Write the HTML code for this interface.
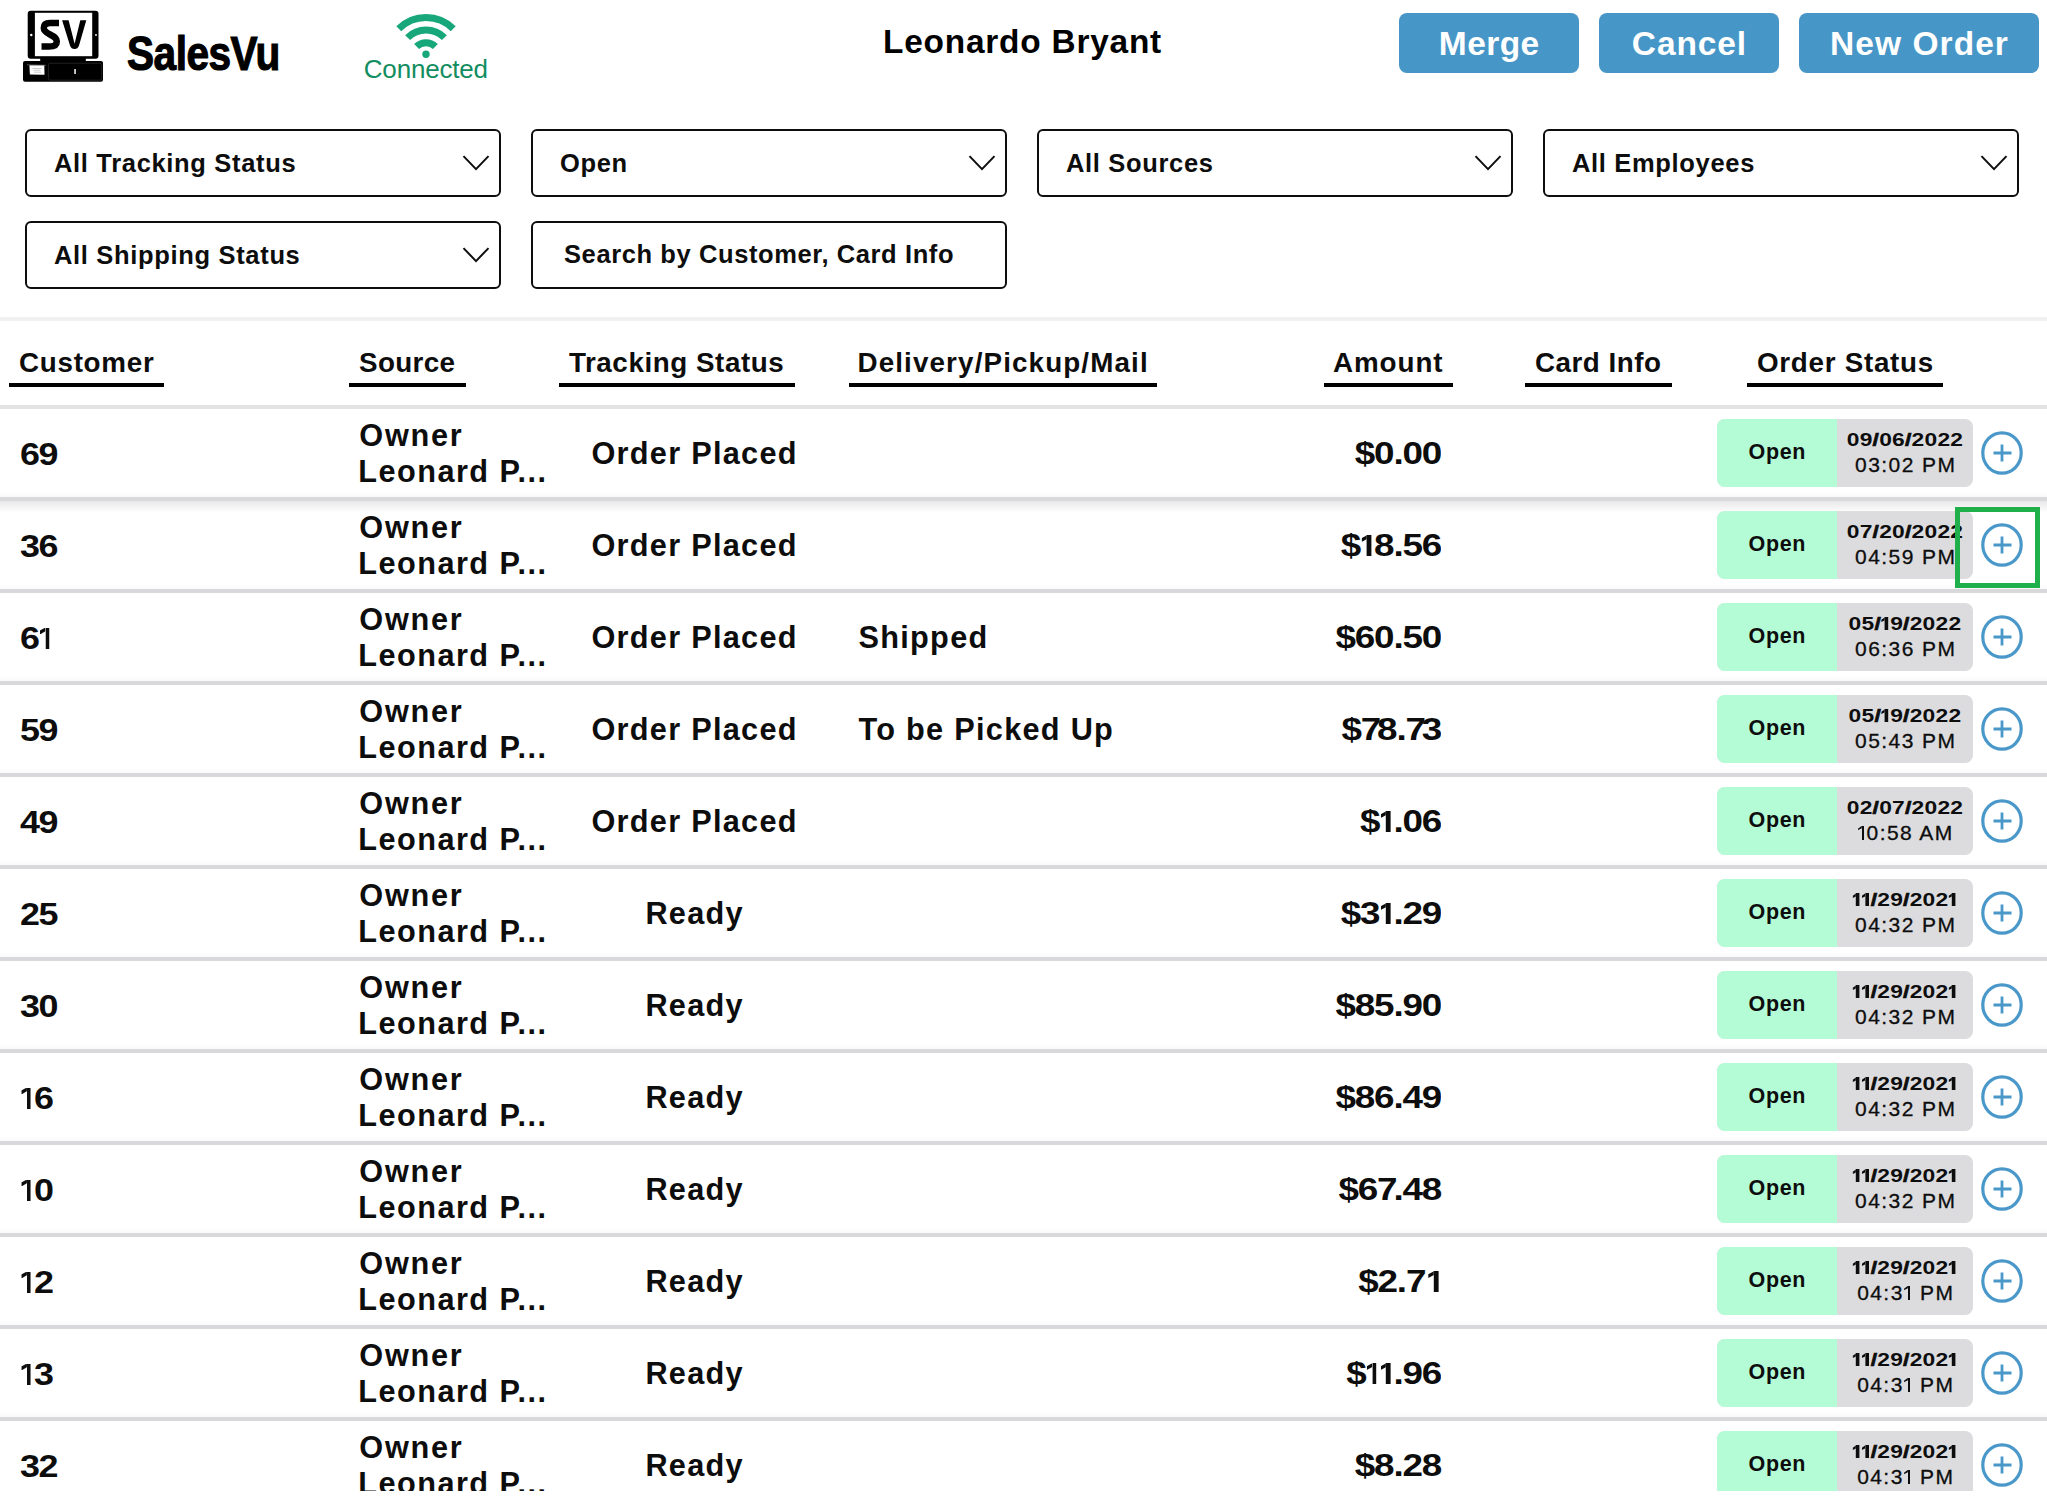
<!DOCTYPE html>
<html><head><meta charset="utf-8"><style>
html,body{margin:0;padding:0;background:#fff;}
body{width:2047px;height:1499px;overflow:hidden;position:relative;font-family:"Liberation Sans",sans-serif;}
.t{position:absolute;white-space:nowrap;line-height:1;font-weight:700;color:#0d0d0d;}
.box{position:absolute;box-sizing:border-box;border:2px solid #0d0d0d;border-radius:6px;background:#fff;}
.btn{position:absolute;background:#4796c8;border-radius:8px;top:13px;height:60px;}
.hl{position:absolute;left:0;width:2047px;}
.ul{position:absolute;height:4px;background:#000;top:383px;}
.o1{display:inline-block;position:relative;width:11.97px;height:21.0px;}.o1::before{content:'';position:absolute;bottom:0;left:5.64px;width:3.85px;height:21.0px;background:currentColor;}.o1::after{content:'';position:absolute;top:0;left:1.11px;width:4.79px;height:6.9px;background:currentColor;clip-path:polygon(0 3.0px,100% 0,100% 3.8px,0 6.9px);}
.o2{display:inline-block;position:relative;width:11.67px;height:21.0px;}.o2::before{content:'';position:absolute;bottom:0;left:5.50px;width:3.75px;height:21.0px;background:currentColor;}.o2::after{content:'';position:absolute;top:0;left:1.08px;width:4.67px;height:6.9px;background:currentColor;clip-path:polygon(0 3.0px,100% 0,100% 3.8px,0 6.9px);}
.o3{display:inline-block;position:relative;width:7.58px;height:12.9px;}.o3::before{content:'';position:absolute;bottom:0;left:3.00px;width:3.00px;height:12.9px;background:currentColor;}.o3::after{content:'';position:absolute;top:0;left:0.25px;width:3.00px;height:4.8px;background:currentColor;clip-path:polygon(0 2.5px,100% 0,100% 3.0px,0 4.8px);}
.o4{display:inline-block;position:relative;width:8.90px;height:14.6px;}.o4::before{content:'';position:absolute;bottom:0;left:3.80px;width:2.80px;height:14.6px;background:currentColor;}.o4::after{content:'';position:absolute;top:0;left:0.00px;width:4.10px;height:4.6px;background:currentColor;clip-path:polygon(0 3.3px,100% 0,100% 2.5px,0 4.6px);}
</style></head><body>
<svg style="position:absolute;left:0;top:0" width="120" height="90" viewBox="0 0 120 90">
<rect x="27.7" y="10.8" width="70.8" height="48" rx="3" fill="#000"/>
<rect x="34.9" y="12.8" width="57.3" height="43.4" fill="#fff"/>
<circle cx="31.3" cy="35" r="1.2" fill="#fff"/><circle cx="96" cy="35" r="0.9" fill="#fff"/>
<rect x="40.2" y="58" width="45.6" height="4" fill="#000"/>
<rect x="23" y="61" width="80" height="20.7" rx="2" fill="#000"/>
<rect x="48.4" y="63.2" width="53.3" height="17" rx="2" fill="none" stroke="#444" stroke-width="0.5"/>
<path d="M29.4 65.3 L44.3 65.3 L44.5 74.7 L29.9 74.5 Z" fill="#fff"/>
<path d="M27 64.8 L46 65.3" stroke="#888" stroke-width="0.6"/>
<path d="M32.5 68.5 H41.5 M33.5 70.3 H40.5 M34 72.2 H41" stroke="#999" stroke-width="0.5"/>
<rect x="74.3" y="69" width="1.5" height="5" fill="#fff"/>
<path d="M59 23.1 L50 23.1 C45.5 23.1 43.8 25 43.8 28 C43.8 31 46 32.5 50 34.5 C55 37 56.8 38.5 56.8 41.5 C56.8 45 54 46.6 49 46.6 L41.5 46.6" fill="none" stroke="#000" stroke-width="6.5"/>
<path d="M62.1 20.2 L68.6 20.2 L74.6 43.8 L80.3 20.2 L86.3 20.2 L79 45.5 Q77.8 49 74.5 49 Q71.2 49 70 45.5 Z" fill="#000"/>
</svg>
<div class="t" style="left:126.5px;top:28.81px;font-size:48.9px;letter-spacing:-0.6px;color:#000;transform:scaleX(0.83);transform-origin:0 0;-webkit-text-stroke:1.2px #000;">SalesVu</div>
<svg style="position:absolute;left:380px;top:0" width="92" height="62" viewBox="380 0 92 62">
<g fill="none" stroke="#18a77a" stroke-width="7">
<path d="M398.78 28.78 A38.5 38.5 0 0 1 453.22 28.78"/>
<path d="M407.62 37.62 A26 26 0 0 1 444.38 37.62"/>
<path d="M416.6 46.6 A13.3 13.3 0 0 1 435.4 46.6"/>
</g><circle cx="426" cy="54.2" r="3.7" fill="#18a77a"/></svg>
<div class="t" style="left:363.8px;top:55.89px;font-size:26px;letter-spacing:-0.2px;font-weight:400;color:#128d60;">Connected</div>
<div class="t" style="left:883px;top:24.93px;font-size:33.4px;letter-spacing:0.79px;color:#000;">Leonardo Bryant</div>
<div class="btn" style="left:1399px;width:180px"></div>
<div class="t" style="left:1399px;top:26.94px;font-size:33.5px;letter-spacing:0.4px;color:#fff;width:180px;text-align:center;text-indent:0.4px;">Merge</div>
<div class="btn" style="left:1599px;width:180px"></div>
<div class="t" style="left:1599px;top:26.94px;font-size:33.5px;letter-spacing:0.88px;color:#fff;width:180px;text-align:center;text-indent:0.88px;">Cancel</div>
<div class="btn" style="left:1799px;width:240px"></div>
<div class="t" style="left:1799px;top:26.94px;font-size:33.5px;letter-spacing:1.05px;color:#fff;width:240px;text-align:center;text-indent:1.05px;">New Order</div>
<div class="box" style="left:25px;top:129px;width:476px;height:68px"></div>
<svg style="position:absolute;left:462px;top:152px" width="30" height="22" viewBox="0 0 30 22"><path d="M1.5 4.1 L14 17.1 L26.5 4.1" fill="none" stroke="#0d0d0d" stroke-width="2"/></svg>
<div class="t" style="left:54px;top:151.41px;font-size:25.5px;letter-spacing:0.67px;">All Tracking Status</div>
<div class="box" style="left:531px;top:129px;width:476px;height:68px"></div>
<svg style="position:absolute;left:968px;top:152px" width="30" height="22" viewBox="0 0 30 22"><path d="M1.5 4.1 L14 17.1 L26.5 4.1" fill="none" stroke="#0d0d0d" stroke-width="2"/></svg>
<div class="t" style="left:560px;top:151.41px;font-size:25.5px;letter-spacing:0.67px;">Open</div>
<div class="box" style="left:1037px;top:129px;width:476px;height:68px"></div>
<svg style="position:absolute;left:1474px;top:152px" width="30" height="22" viewBox="0 0 30 22"><path d="M1.5 4.1 L14 17.1 L26.5 4.1" fill="none" stroke="#0d0d0d" stroke-width="2"/></svg>
<div class="t" style="left:1066px;top:151.41px;font-size:25.5px;letter-spacing:0.67px;">All Sources</div>
<div class="box" style="left:1543px;top:129px;width:476px;height:68px"></div>
<svg style="position:absolute;left:1980px;top:152px" width="30" height="22" viewBox="0 0 30 22"><path d="M1.5 4.1 L14 17.1 L26.5 4.1" fill="none" stroke="#0d0d0d" stroke-width="2"/></svg>
<div class="t" style="left:1572px;top:151.41px;font-size:25.5px;letter-spacing:0.67px;">All Employees</div>
<div class="box" style="left:25px;top:221px;width:476px;height:68px"></div>
<svg style="position:absolute;left:462px;top:244px" width="30" height="22" viewBox="0 0 30 22"><path d="M1.5 4.1 L14 17.1 L26.5 4.1" fill="none" stroke="#0d0d0d" stroke-width="2"/></svg>
<div class="t" style="left:54px;top:242.61px;font-size:25.5px;letter-spacing:0.67px;">All Shipping Status</div>
<div class="box" style="left:531px;top:221px;width:476px;height:68px"></div>
<div class="t" style="left:564px;top:241.61px;font-size:25.5px;letter-spacing:0.6px;">Search by Customer, Card Info</div>
<div class="hl" style="top:317px;height:4px;background:#f1f1f1"></div>
<div class="hl" style="top:405px;height:4px;background:#e3e3e3"></div>
<div class="t" style="left:19px;top:349.47px;font-size:27.8px;letter-spacing:0.71px;">Customer</div>
<div class="ul" style="left:9px;width:155px"></div>
<div class="t" style="left:359px;top:349.47px;font-size:27.8px;letter-spacing:0.35px;">Source</div>
<div class="ul" style="left:349px;width:117px"></div>
<div class="t" style="left:569px;top:349.47px;font-size:27.8px;letter-spacing:0.55px;">Tracking Status</div>
<div class="ul" style="left:559px;width:236px"></div>
<div class="t" style="left:857.5px;top:349.47px;font-size:27.8px;letter-spacing:1.12px;">Delivery/Pickup/Mail</div>
<div class="ul" style="left:849px;width:308px"></div>
<div class="t" style="left:1333px;top:349.47px;font-size:27.8px;letter-spacing:0.91px;">Amount</div>
<div class="ul" style="left:1324px;width:129px"></div>
<div class="t" style="left:1535px;top:349.47px;font-size:27.8px;letter-spacing:0.5px;">Card Info</div>
<div class="ul" style="left:1525px;width:147px"></div>
<div class="t" style="left:1757px;top:349.47px;font-size:27.8px;letter-spacing:0.71px;">Order Status</div>
<div class="ul" style="left:1747px;width:196px"></div>
<div style="position:absolute;left:0;top:0;width:2047px;height:1491px;overflow:hidden">
<div class="hl" style="top:492px;height:5px;background:linear-gradient(rgba(0,0,0,0),rgba(0,0,0,0.025))"></div><div class="hl" style="top:497px;height:4px;background:#d9d9dc"></div>
<div class="t" style="left:19.8px;top:439.51px;font-size:30.7px;letter-spacing:-1.2px;transform:scaleX(1.17);transform-origin:0 0;">69</div>
<div class="t" style="left:359.3px;top:420.51px;font-size:30.7px;letter-spacing:1.75px;">Owner</div>
<div class="t" style="left:358.3px;top:457.41px;font-size:30.7px;letter-spacing:1.45px;">Leonard P...</div>
<div class="t" style="left:494px;top:439.21px;font-size:30.7px;letter-spacing:1.28px;width:400px;text-align:center;text-indent:1.28px;">Order Placed</div>
<div class="t" style="left:1041.0px;top:439.21px;font-size:30.7px;letter-spacing:-1.0px;width:400px;text-align:right;transform:scaleX(1.2);transform-origin:100% 0;">$0.00</div>
<div style="position:absolute;left:1717px;top:419px;width:256px;height:68px;border-radius:8px;background:#dcdcde;overflow:hidden"><div style="width:120px;height:68px;background:#b4fcd6"></div></div>
<div class="t" style="left:1717px;top:441.90px;font-size:21.5px;letter-spacing:0.6px;width:120px;text-align:center;text-indent:0.6px;">Open</div>
<div class="t" style="left:1837px;top:430.12px;font-size:19px;letter-spacing:0.2px;width:136px;text-align:center;transform:scaleX(1.2);transform-origin:50% 0;">09<span style="-webkit-text-stroke:0.7px">/</span>06<span style="-webkit-text-stroke:0.7px">/</span>2022</div>
<div class="t" style="left:1837px;top:454.22px;font-size:21px;letter-spacing:1.44px;font-weight:400;width:136px;text-align:center;text-indent:1.44px;-webkit-text-stroke:0.3px #0d0d0d;">03:02 PM</div>
<svg style="position:absolute;left:1978px;top:429px" width="48" height="48" viewBox="0 0 48 48"><ellipse cx="24" cy="24" rx="19.2" ry="20.2" fill="none" stroke="#4a98c9" stroke-width="3.2"/><path d="M15.5 24 H33.5 M24 15.5 V32.5" stroke="#4a98c9" stroke-width="2.8"/></svg>
<div class="hl" style="top:584px;height:5px;background:linear-gradient(rgba(0,0,0,0),rgba(0,0,0,0.025))"></div><div class="hl" style="top:589px;height:4px;background:#d9d9dc"></div>
<div class="t" style="left:19.8px;top:531.51px;font-size:30.7px;letter-spacing:-1.2px;transform:scaleX(1.17);transform-origin:0 0;">36</div>
<div class="t" style="left:359.3px;top:512.51px;font-size:30.7px;letter-spacing:1.75px;">Owner</div>
<div class="t" style="left:358.3px;top:549.41px;font-size:30.7px;letter-spacing:1.45px;">Leonard P...</div>
<div class="t" style="left:494px;top:531.21px;font-size:30.7px;letter-spacing:1.28px;width:400px;text-align:center;text-indent:1.28px;">Order Placed</div>
<div class="t" style="left:1041.0px;top:531.21px;font-size:30.7px;letter-spacing:-1.0px;width:400px;text-align:right;transform:scaleX(1.2);transform-origin:100% 0;">$<span class="o2"></span>8.56</div>
<div style="position:absolute;left:1717px;top:511px;width:256px;height:68px;border-radius:8px;background:#dcdcde;overflow:hidden"><div style="width:120px;height:68px;background:#b4fcd6"></div></div>
<div class="t" style="left:1717px;top:533.90px;font-size:21.5px;letter-spacing:0.6px;width:120px;text-align:center;text-indent:0.6px;">Open</div>
<div class="t" style="left:1837px;top:522.12px;font-size:19px;letter-spacing:0.2px;width:136px;text-align:center;transform:scaleX(1.2);transform-origin:50% 0;">0<span style="margin-right:0px">7</span><span style="-webkit-text-stroke:0.7px">/</span>20<span style="-webkit-text-stroke:0.7px">/</span>2022</div>
<div class="t" style="left:1837px;top:546.22px;font-size:21px;letter-spacing:1.44px;font-weight:400;width:136px;text-align:center;text-indent:1.44px;-webkit-text-stroke:0.3px #0d0d0d;">04:59 PM</div>
<svg style="position:absolute;left:1978px;top:521px" width="48" height="48" viewBox="0 0 48 48"><ellipse cx="24" cy="24" rx="19.2" ry="20.2" fill="none" stroke="#4a98c9" stroke-width="3.2"/><path d="M15.5 24 H33.5 M24 15.5 V32.5" stroke="#4a98c9" stroke-width="2.8"/></svg>
<div class="hl" style="top:676px;height:5px;background:linear-gradient(rgba(0,0,0,0),rgba(0,0,0,0.025))"></div><div class="hl" style="top:681px;height:4px;background:#d9d9dc"></div>
<div class="t" style="left:19.8px;top:623.51px;font-size:30.7px;letter-spacing:-1.2px;transform:scaleX(1.17);transform-origin:0 0;">6<span class="o1"></span></div>
<div class="t" style="left:359.3px;top:604.51px;font-size:30.7px;letter-spacing:1.75px;">Owner</div>
<div class="t" style="left:358.3px;top:641.41px;font-size:30.7px;letter-spacing:1.45px;">Leonard P...</div>
<div class="t" style="left:494px;top:623.21px;font-size:30.7px;letter-spacing:1.28px;width:400px;text-align:center;text-indent:1.28px;">Order Placed</div>
<div class="t" style="left:858.5px;top:623.21px;font-size:30.7px;letter-spacing:1.28px;">Shipped</div>
<div class="t" style="left:1041.0px;top:623.21px;font-size:30.7px;letter-spacing:-1.0px;width:400px;text-align:right;transform:scaleX(1.2);transform-origin:100% 0;">$60.50</div>
<div style="position:absolute;left:1717px;top:603px;width:256px;height:68px;border-radius:8px;background:#dcdcde;overflow:hidden"><div style="width:120px;height:68px;background:#b4fcd6"></div></div>
<div class="t" style="left:1717px;top:625.90px;font-size:21.5px;letter-spacing:0.6px;width:120px;text-align:center;text-indent:0.6px;">Open</div>
<div class="t" style="left:1837px;top:614.12px;font-size:19px;letter-spacing:0.2px;width:136px;text-align:center;transform:scaleX(1.2);transform-origin:50% 0;">05<span style="-webkit-text-stroke:0.7px">/</span><span class="o3"></span>9<span style="-webkit-text-stroke:0.7px">/</span>2022</div>
<div class="t" style="left:1837px;top:638.22px;font-size:21px;letter-spacing:1.44px;font-weight:400;width:136px;text-align:center;text-indent:1.44px;-webkit-text-stroke:0.3px #0d0d0d;">06:36 PM</div>
<svg style="position:absolute;left:1978px;top:613px" width="48" height="48" viewBox="0 0 48 48"><ellipse cx="24" cy="24" rx="19.2" ry="20.2" fill="none" stroke="#4a98c9" stroke-width="3.2"/><path d="M15.5 24 H33.5 M24 15.5 V32.5" stroke="#4a98c9" stroke-width="2.8"/></svg>
<div class="hl" style="top:768px;height:5px;background:linear-gradient(rgba(0,0,0,0),rgba(0,0,0,0.025))"></div><div class="hl" style="top:773px;height:4px;background:#d9d9dc"></div>
<div class="t" style="left:19.8px;top:715.51px;font-size:30.7px;letter-spacing:-1.2px;transform:scaleX(1.17);transform-origin:0 0;">59</div>
<div class="t" style="left:359.3px;top:696.51px;font-size:30.7px;letter-spacing:1.75px;">Owner</div>
<div class="t" style="left:358.3px;top:733.41px;font-size:30.7px;letter-spacing:1.45px;">Leonard P...</div>
<div class="t" style="left:494px;top:715.21px;font-size:30.7px;letter-spacing:1.28px;width:400px;text-align:center;text-indent:1.28px;">Order Placed</div>
<div class="t" style="left:858.5px;top:715.21px;font-size:30.7px;letter-spacing:1.28px;">To be Picked Up</div>
<div class="t" style="left:1041.0px;top:715.21px;font-size:30.7px;letter-spacing:-1.0px;width:400px;text-align:right;transform:scaleX(1.2);transform-origin:100% 0;">$<span style="margin-right:-2.5px">7</span>8.<span style="margin-right:-2.5px">7</span>3</div>
<div style="position:absolute;left:1717px;top:695px;width:256px;height:68px;border-radius:8px;background:#dcdcde;overflow:hidden"><div style="width:120px;height:68px;background:#b4fcd6"></div></div>
<div class="t" style="left:1717px;top:717.90px;font-size:21.5px;letter-spacing:0.6px;width:120px;text-align:center;text-indent:0.6px;">Open</div>
<div class="t" style="left:1837px;top:706.12px;font-size:19px;letter-spacing:0.2px;width:136px;text-align:center;transform:scaleX(1.2);transform-origin:50% 0;">05<span style="-webkit-text-stroke:0.7px">/</span><span class="o3"></span>9<span style="-webkit-text-stroke:0.7px">/</span>2022</div>
<div class="t" style="left:1837px;top:730.22px;font-size:21px;letter-spacing:1.44px;font-weight:400;width:136px;text-align:center;text-indent:1.44px;-webkit-text-stroke:0.3px #0d0d0d;">05:43 PM</div>
<svg style="position:absolute;left:1978px;top:705px" width="48" height="48" viewBox="0 0 48 48"><ellipse cx="24" cy="24" rx="19.2" ry="20.2" fill="none" stroke="#4a98c9" stroke-width="3.2"/><path d="M15.5 24 H33.5 M24 15.5 V32.5" stroke="#4a98c9" stroke-width="2.8"/></svg>
<div class="hl" style="top:860px;height:5px;background:linear-gradient(rgba(0,0,0,0),rgba(0,0,0,0.025))"></div><div class="hl" style="top:865px;height:4px;background:#d9d9dc"></div>
<div class="t" style="left:19.8px;top:807.51px;font-size:30.7px;letter-spacing:-1.2px;transform:scaleX(1.17);transform-origin:0 0;">49</div>
<div class="t" style="left:359.3px;top:788.51px;font-size:30.7px;letter-spacing:1.75px;">Owner</div>
<div class="t" style="left:358.3px;top:825.41px;font-size:30.7px;letter-spacing:1.45px;">Leonard P...</div>
<div class="t" style="left:494px;top:807.21px;font-size:30.7px;letter-spacing:1.28px;width:400px;text-align:center;text-indent:1.28px;">Order Placed</div>
<div class="t" style="left:1041.0px;top:807.21px;font-size:30.7px;letter-spacing:-1.0px;width:400px;text-align:right;transform:scaleX(1.2);transform-origin:100% 0;">$<span class="o2"></span>.06</div>
<div style="position:absolute;left:1717px;top:787px;width:256px;height:68px;border-radius:8px;background:#dcdcde;overflow:hidden"><div style="width:120px;height:68px;background:#b4fcd6"></div></div>
<div class="t" style="left:1717px;top:809.90px;font-size:21.5px;letter-spacing:0.6px;width:120px;text-align:center;text-indent:0.6px;">Open</div>
<div class="t" style="left:1837px;top:798.12px;font-size:19px;letter-spacing:0.2px;width:136px;text-align:center;transform:scaleX(1.2);transform-origin:50% 0;">02<span style="-webkit-text-stroke:0.7px">/</span>0<span style="margin-right:0px">7</span><span style="-webkit-text-stroke:0.7px">/</span>2022</div>
<div class="t" style="left:1837px;top:822.22px;font-size:21px;letter-spacing:1.44px;font-weight:400;width:136px;text-align:center;text-indent:1.44px;-webkit-text-stroke:0.3px #0d0d0d;"><span class="o4"></span>0:58 AM</div>
<svg style="position:absolute;left:1978px;top:797px" width="48" height="48" viewBox="0 0 48 48"><ellipse cx="24" cy="24" rx="19.2" ry="20.2" fill="none" stroke="#4a98c9" stroke-width="3.2"/><path d="M15.5 24 H33.5 M24 15.5 V32.5" stroke="#4a98c9" stroke-width="2.8"/></svg>
<div class="hl" style="top:952px;height:5px;background:linear-gradient(rgba(0,0,0,0),rgba(0,0,0,0.025))"></div><div class="hl" style="top:957px;height:4px;background:#d9d9dc"></div>
<div class="t" style="left:19.8px;top:899.51px;font-size:30.7px;letter-spacing:-1.2px;transform:scaleX(1.17);transform-origin:0 0;">25</div>
<div class="t" style="left:359.3px;top:880.51px;font-size:30.7px;letter-spacing:1.75px;">Owner</div>
<div class="t" style="left:358.3px;top:917.41px;font-size:30.7px;letter-spacing:1.45px;">Leonard P...</div>
<div class="t" style="left:494px;top:899.21px;font-size:30.7px;letter-spacing:1.28px;width:400px;text-align:center;text-indent:1.28px;">Ready</div>
<div class="t" style="left:1041.0px;top:899.21px;font-size:30.7px;letter-spacing:-1.0px;width:400px;text-align:right;transform:scaleX(1.2);transform-origin:100% 0;">$3<span class="o2"></span>.29</div>
<div style="position:absolute;left:1717px;top:879px;width:256px;height:68px;border-radius:8px;background:#dcdcde;overflow:hidden"><div style="width:120px;height:68px;background:#b4fcd6"></div></div>
<div class="t" style="left:1717px;top:901.90px;font-size:21.5px;letter-spacing:0.6px;width:120px;text-align:center;text-indent:0.6px;">Open</div>
<div class="t" style="left:1837px;top:890.12px;font-size:19px;letter-spacing:0.2px;width:136px;text-align:center;transform:scaleX(1.2);transform-origin:50% 0;"><span class="o3"></span><span class="o3"></span><span style="-webkit-text-stroke:0.7px">/</span>29<span style="-webkit-text-stroke:0.7px">/</span>202<span class="o3"></span></div>
<div class="t" style="left:1837px;top:914.22px;font-size:21px;letter-spacing:1.44px;font-weight:400;width:136px;text-align:center;text-indent:1.44px;-webkit-text-stroke:0.3px #0d0d0d;">04:32 PM</div>
<svg style="position:absolute;left:1978px;top:889px" width="48" height="48" viewBox="0 0 48 48"><ellipse cx="24" cy="24" rx="19.2" ry="20.2" fill="none" stroke="#4a98c9" stroke-width="3.2"/><path d="M15.5 24 H33.5 M24 15.5 V32.5" stroke="#4a98c9" stroke-width="2.8"/></svg>
<div class="hl" style="top:1044px;height:5px;background:linear-gradient(rgba(0,0,0,0),rgba(0,0,0,0.025))"></div><div class="hl" style="top:1049px;height:4px;background:#d9d9dc"></div>
<div class="t" style="left:19.8px;top:991.51px;font-size:30.7px;letter-spacing:-1.2px;transform:scaleX(1.17);transform-origin:0 0;">30</div>
<div class="t" style="left:359.3px;top:972.51px;font-size:30.7px;letter-spacing:1.75px;">Owner</div>
<div class="t" style="left:358.3px;top:1009.41px;font-size:30.7px;letter-spacing:1.45px;">Leonard P...</div>
<div class="t" style="left:494px;top:991.21px;font-size:30.7px;letter-spacing:1.28px;width:400px;text-align:center;text-indent:1.28px;">Ready</div>
<div class="t" style="left:1041.0px;top:991.21px;font-size:30.7px;letter-spacing:-1.0px;width:400px;text-align:right;transform:scaleX(1.2);transform-origin:100% 0;">$85.90</div>
<div style="position:absolute;left:1717px;top:971px;width:256px;height:68px;border-radius:8px;background:#dcdcde;overflow:hidden"><div style="width:120px;height:68px;background:#b4fcd6"></div></div>
<div class="t" style="left:1717px;top:993.90px;font-size:21.5px;letter-spacing:0.6px;width:120px;text-align:center;text-indent:0.6px;">Open</div>
<div class="t" style="left:1837px;top:982.12px;font-size:19px;letter-spacing:0.2px;width:136px;text-align:center;transform:scaleX(1.2);transform-origin:50% 0;"><span class="o3"></span><span class="o3"></span><span style="-webkit-text-stroke:0.7px">/</span>29<span style="-webkit-text-stroke:0.7px">/</span>202<span class="o3"></span></div>
<div class="t" style="left:1837px;top:1006.22px;font-size:21px;letter-spacing:1.44px;font-weight:400;width:136px;text-align:center;text-indent:1.44px;-webkit-text-stroke:0.3px #0d0d0d;">04:32 PM</div>
<svg style="position:absolute;left:1978px;top:981px" width="48" height="48" viewBox="0 0 48 48"><ellipse cx="24" cy="24" rx="19.2" ry="20.2" fill="none" stroke="#4a98c9" stroke-width="3.2"/><path d="M15.5 24 H33.5 M24 15.5 V32.5" stroke="#4a98c9" stroke-width="2.8"/></svg>
<div class="hl" style="top:1136px;height:5px;background:linear-gradient(rgba(0,0,0,0),rgba(0,0,0,0.025))"></div><div class="hl" style="top:1141px;height:4px;background:#d9d9dc"></div>
<div class="t" style="left:19.8px;top:1083.51px;font-size:30.7px;letter-spacing:-1.2px;transform:scaleX(1.17);transform-origin:0 0;"><span class="o1"></span>6</div>
<div class="t" style="left:359.3px;top:1064.51px;font-size:30.7px;letter-spacing:1.75px;">Owner</div>
<div class="t" style="left:358.3px;top:1101.41px;font-size:30.7px;letter-spacing:1.45px;">Leonard P...</div>
<div class="t" style="left:494px;top:1083.21px;font-size:30.7px;letter-spacing:1.28px;width:400px;text-align:center;text-indent:1.28px;">Ready</div>
<div class="t" style="left:1041.0px;top:1083.21px;font-size:30.7px;letter-spacing:-1.0px;width:400px;text-align:right;transform:scaleX(1.2);transform-origin:100% 0;">$86.49</div>
<div style="position:absolute;left:1717px;top:1063px;width:256px;height:68px;border-radius:8px;background:#dcdcde;overflow:hidden"><div style="width:120px;height:68px;background:#b4fcd6"></div></div>
<div class="t" style="left:1717px;top:1085.90px;font-size:21.5px;letter-spacing:0.6px;width:120px;text-align:center;text-indent:0.6px;">Open</div>
<div class="t" style="left:1837px;top:1074.12px;font-size:19px;letter-spacing:0.2px;width:136px;text-align:center;transform:scaleX(1.2);transform-origin:50% 0;"><span class="o3"></span><span class="o3"></span><span style="-webkit-text-stroke:0.7px">/</span>29<span style="-webkit-text-stroke:0.7px">/</span>202<span class="o3"></span></div>
<div class="t" style="left:1837px;top:1098.22px;font-size:21px;letter-spacing:1.44px;font-weight:400;width:136px;text-align:center;text-indent:1.44px;-webkit-text-stroke:0.3px #0d0d0d;">04:32 PM</div>
<svg style="position:absolute;left:1978px;top:1073px" width="48" height="48" viewBox="0 0 48 48"><ellipse cx="24" cy="24" rx="19.2" ry="20.2" fill="none" stroke="#4a98c9" stroke-width="3.2"/><path d="M15.5 24 H33.5 M24 15.5 V32.5" stroke="#4a98c9" stroke-width="2.8"/></svg>
<div class="hl" style="top:1228px;height:5px;background:linear-gradient(rgba(0,0,0,0),rgba(0,0,0,0.025))"></div><div class="hl" style="top:1233px;height:4px;background:#d9d9dc"></div>
<div class="t" style="left:19.8px;top:1175.51px;font-size:30.7px;letter-spacing:-1.2px;transform:scaleX(1.17);transform-origin:0 0;"><span class="o1"></span>0</div>
<div class="t" style="left:359.3px;top:1156.51px;font-size:30.7px;letter-spacing:1.75px;">Owner</div>
<div class="t" style="left:358.3px;top:1193.41px;font-size:30.7px;letter-spacing:1.45px;">Leonard P...</div>
<div class="t" style="left:494px;top:1175.21px;font-size:30.7px;letter-spacing:1.28px;width:400px;text-align:center;text-indent:1.28px;">Ready</div>
<div class="t" style="left:1041.0px;top:1175.21px;font-size:30.7px;letter-spacing:-1.0px;width:400px;text-align:right;transform:scaleX(1.2);transform-origin:100% 0;">$6<span style="margin-right:-2.5px">7</span>.48</div>
<div style="position:absolute;left:1717px;top:1155px;width:256px;height:68px;border-radius:8px;background:#dcdcde;overflow:hidden"><div style="width:120px;height:68px;background:#b4fcd6"></div></div>
<div class="t" style="left:1717px;top:1177.90px;font-size:21.5px;letter-spacing:0.6px;width:120px;text-align:center;text-indent:0.6px;">Open</div>
<div class="t" style="left:1837px;top:1166.12px;font-size:19px;letter-spacing:0.2px;width:136px;text-align:center;transform:scaleX(1.2);transform-origin:50% 0;"><span class="o3"></span><span class="o3"></span><span style="-webkit-text-stroke:0.7px">/</span>29<span style="-webkit-text-stroke:0.7px">/</span>202<span class="o3"></span></div>
<div class="t" style="left:1837px;top:1190.22px;font-size:21px;letter-spacing:1.44px;font-weight:400;width:136px;text-align:center;text-indent:1.44px;-webkit-text-stroke:0.3px #0d0d0d;">04:32 PM</div>
<svg style="position:absolute;left:1978px;top:1165px" width="48" height="48" viewBox="0 0 48 48"><ellipse cx="24" cy="24" rx="19.2" ry="20.2" fill="none" stroke="#4a98c9" stroke-width="3.2"/><path d="M15.5 24 H33.5 M24 15.5 V32.5" stroke="#4a98c9" stroke-width="2.8"/></svg>
<div class="hl" style="top:1320px;height:5px;background:linear-gradient(rgba(0,0,0,0),rgba(0,0,0,0.025))"></div><div class="hl" style="top:1325px;height:4px;background:#d9d9dc"></div>
<div class="t" style="left:19.8px;top:1267.51px;font-size:30.7px;letter-spacing:-1.2px;transform:scaleX(1.17);transform-origin:0 0;"><span class="o1"></span>2</div>
<div class="t" style="left:359.3px;top:1248.51px;font-size:30.7px;letter-spacing:1.75px;">Owner</div>
<div class="t" style="left:358.3px;top:1285.41px;font-size:30.7px;letter-spacing:1.45px;">Leonard P...</div>
<div class="t" style="left:494px;top:1267.21px;font-size:30.7px;letter-spacing:1.28px;width:400px;text-align:center;text-indent:1.28px;">Ready</div>
<div class="t" style="left:1041.0px;top:1267.21px;font-size:30.7px;letter-spacing:-1.0px;width:400px;text-align:right;transform:scaleX(1.2);transform-origin:100% 0;">$2.<span style="margin-right:1.5px">7</span><span class="o2"></span></div>
<div style="position:absolute;left:1717px;top:1247px;width:256px;height:68px;border-radius:8px;background:#dcdcde;overflow:hidden"><div style="width:120px;height:68px;background:#b4fcd6"></div></div>
<div class="t" style="left:1717px;top:1269.90px;font-size:21.5px;letter-spacing:0.6px;width:120px;text-align:center;text-indent:0.6px;">Open</div>
<div class="t" style="left:1837px;top:1258.12px;font-size:19px;letter-spacing:0.2px;width:136px;text-align:center;transform:scaleX(1.2);transform-origin:50% 0;"><span class="o3"></span><span class="o3"></span><span style="-webkit-text-stroke:0.7px">/</span>29<span style="-webkit-text-stroke:0.7px">/</span>202<span class="o3"></span></div>
<div class="t" style="left:1837px;top:1282.22px;font-size:21px;letter-spacing:1.44px;font-weight:400;width:136px;text-align:center;text-indent:1.44px;-webkit-text-stroke:0.3px #0d0d0d;">04:3<span class="o4"></span> PM</div>
<svg style="position:absolute;left:1978px;top:1257px" width="48" height="48" viewBox="0 0 48 48"><ellipse cx="24" cy="24" rx="19.2" ry="20.2" fill="none" stroke="#4a98c9" stroke-width="3.2"/><path d="M15.5 24 H33.5 M24 15.5 V32.5" stroke="#4a98c9" stroke-width="2.8"/></svg>
<div class="hl" style="top:1412px;height:5px;background:linear-gradient(rgba(0,0,0,0),rgba(0,0,0,0.025))"></div><div class="hl" style="top:1417px;height:4px;background:#d9d9dc"></div>
<div class="t" style="left:19.8px;top:1359.51px;font-size:30.7px;letter-spacing:-1.2px;transform:scaleX(1.17);transform-origin:0 0;"><span class="o1"></span>3</div>
<div class="t" style="left:359.3px;top:1340.51px;font-size:30.7px;letter-spacing:1.75px;">Owner</div>
<div class="t" style="left:358.3px;top:1377.41px;font-size:30.7px;letter-spacing:1.45px;">Leonard P...</div>
<div class="t" style="left:494px;top:1359.21px;font-size:30.7px;letter-spacing:1.28px;width:400px;text-align:center;text-indent:1.28px;">Ready</div>
<div class="t" style="left:1041.0px;top:1359.21px;font-size:30.7px;letter-spacing:-1.0px;width:400px;text-align:right;transform:scaleX(1.2);transform-origin:100% 0;">$<span class="o2"></span><span class="o2"></span>.96</div>
<div style="position:absolute;left:1717px;top:1339px;width:256px;height:68px;border-radius:8px;background:#dcdcde;overflow:hidden"><div style="width:120px;height:68px;background:#b4fcd6"></div></div>
<div class="t" style="left:1717px;top:1361.90px;font-size:21.5px;letter-spacing:0.6px;width:120px;text-align:center;text-indent:0.6px;">Open</div>
<div class="t" style="left:1837px;top:1350.12px;font-size:19px;letter-spacing:0.2px;width:136px;text-align:center;transform:scaleX(1.2);transform-origin:50% 0;"><span class="o3"></span><span class="o3"></span><span style="-webkit-text-stroke:0.7px">/</span>29<span style="-webkit-text-stroke:0.7px">/</span>202<span class="o3"></span></div>
<div class="t" style="left:1837px;top:1374.22px;font-size:21px;letter-spacing:1.44px;font-weight:400;width:136px;text-align:center;text-indent:1.44px;-webkit-text-stroke:0.3px #0d0d0d;">04:3<span class="o4"></span> PM</div>
<svg style="position:absolute;left:1978px;top:1349px" width="48" height="48" viewBox="0 0 48 48"><ellipse cx="24" cy="24" rx="19.2" ry="20.2" fill="none" stroke="#4a98c9" stroke-width="3.2"/><path d="M15.5 24 H33.5 M24 15.5 V32.5" stroke="#4a98c9" stroke-width="2.8"/></svg>
<div class="hl" style="top:1504px;height:5px;background:linear-gradient(rgba(0,0,0,0),rgba(0,0,0,0.025))"></div><div class="hl" style="top:1509px;height:4px;background:#d9d9dc"></div>
<div class="t" style="left:19.8px;top:1451.51px;font-size:30.7px;letter-spacing:-1.2px;transform:scaleX(1.17);transform-origin:0 0;">32</div>
<div class="t" style="left:359.3px;top:1432.51px;font-size:30.7px;letter-spacing:1.75px;">Owner</div>
<div class="t" style="left:358.3px;top:1469.41px;font-size:30.7px;letter-spacing:1.45px;">Leonard P...</div>
<div class="t" style="left:494px;top:1451.21px;font-size:30.7px;letter-spacing:1.28px;width:400px;text-align:center;text-indent:1.28px;">Ready</div>
<div class="t" style="left:1041.0px;top:1451.21px;font-size:30.7px;letter-spacing:-1.0px;width:400px;text-align:right;transform:scaleX(1.2);transform-origin:100% 0;">$8.28</div>
<div style="position:absolute;left:1717px;top:1431px;width:256px;height:68px;border-radius:8px;background:#dcdcde;overflow:hidden"><div style="width:120px;height:68px;background:#b4fcd6"></div></div>
<div class="t" style="left:1717px;top:1453.90px;font-size:21.5px;letter-spacing:0.6px;width:120px;text-align:center;text-indent:0.6px;">Open</div>
<div class="t" style="left:1837px;top:1442.12px;font-size:19px;letter-spacing:0.2px;width:136px;text-align:center;transform:scaleX(1.2);transform-origin:50% 0;"><span class="o3"></span><span class="o3"></span><span style="-webkit-text-stroke:0.7px">/</span>29<span style="-webkit-text-stroke:0.7px">/</span>202<span class="o3"></span></div>
<div class="t" style="left:1837px;top:1466.22px;font-size:21px;letter-spacing:1.44px;font-weight:400;width:136px;text-align:center;text-indent:1.44px;-webkit-text-stroke:0.3px #0d0d0d;">04:3<span class="o4"></span> PM</div>
<svg style="position:absolute;left:1978px;top:1441px" width="48" height="48" viewBox="0 0 48 48"><ellipse cx="24" cy="24" rx="19.2" ry="20.2" fill="none" stroke="#4a98c9" stroke-width="3.2"/><path d="M15.5 24 H33.5 M24 15.5 V32.5" stroke="#4a98c9" stroke-width="2.8"/></svg>
<div class="hl" style="top:501px;height:12px;background:linear-gradient(#e8e8e8,rgba(255,255,255,0))"></div>
</div>
<div style="position:absolute;left:1955px;top:507px;width:85px;height:81px;box-sizing:border-box;border:5px solid #20b04b"></div>
</body></html>
